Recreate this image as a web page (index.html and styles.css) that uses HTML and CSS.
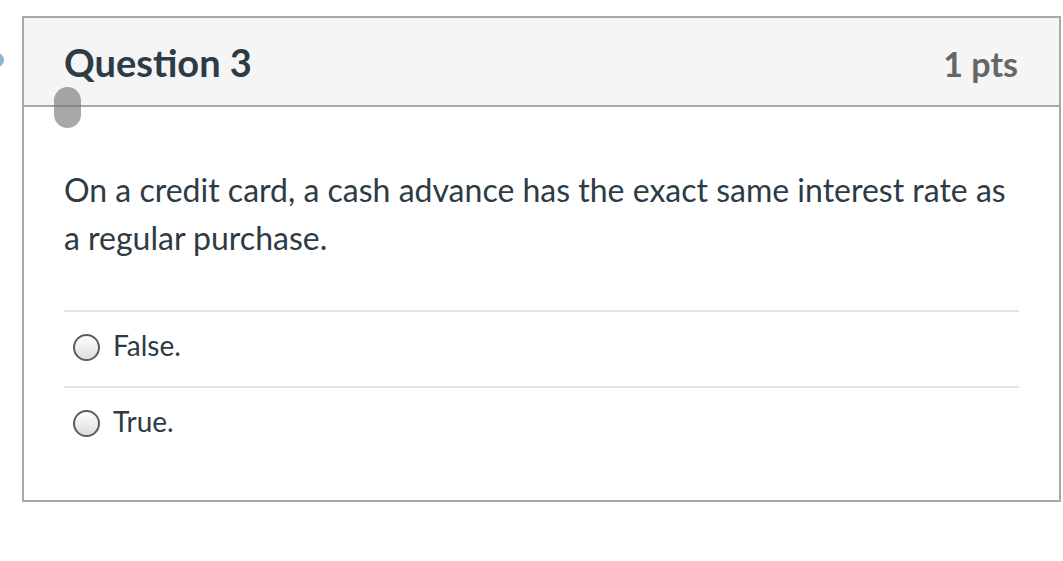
FILE: index.html
```html
<!DOCTYPE html>
<html lang="en">
<head>
    <meta charset="UTF-8">
    <meta name="viewport" content="width=device-width, initial-scale=1.0">
    <title>Question 3</title>
    <link rel="stylesheet" href="styles.css">
</head>
<body>

    <div class="page">
        <span class="flag"></span>
        <div class="question">
            <div class="header">
                <h2 class="title">Question 3</h2>
                <div class="points">1 pts</div>
                <span class="handle"></span>
            </div>
            <div class="content">
                <p class="text">On a credit card, a cash advance has the exact same interest rate as a regular purchase.</p>
                <div class="answers">
                    <label class="answer">
                        <span class="radio"></span>
                        <span class="label">False.</span>
                    </label>
                    <label class="answer">
                        <span class="radio"></span>
                        <span class="label">True.</span>
                    </label>
                </div>
            </div>
        </div>
    </div>

</body>
</html>
```

FILE: styles.css
```css
body
    {
        margin: 0;
        background: #ffffff;
        font-family: Lato, "Open Sans", sans-serif;
        color: #2d3b45;
    }
    .page
    {
        position: relative;
        padding: 16px 2px 0 22px;
    }
    .flag
    {
        position: absolute;
        top: 53px;
        left: -10px;
        width: 14px;
        height: 14px;
        border-radius: 50%;
        background: #8fb4cf;
    }
    .question
    {
        border: 2px solid #a8a8a8;
    }
    .header
    {
        position: relative;
        display: flex;
        justify-content: space-between;
        align-items: center;
        height: 87px;
        padding: 0 41px 0 40px;
        background: #f5f5f5;
        border-bottom: 2px solid #a8a8a8;
    }
    .title
    {
        margin: 0;
        font-size: 38px;
        font-weight: bold;
        color: #2d3b45;
    }
    .points
    {
        padding-top: 3px;
        font-size: 34px;
        font-weight: bold;
        color: #666666;
    }
    .handle
    {
        position: absolute;
        left: 30px;
        bottom: -23px;
        width: 27px;
        height: 41px;
        border-radius: 14px;
        background: rgba(110, 110, 110, 0.6);
    }
    .content
    {
        padding: 59px 40px 38px 40px;
    }
    .text
    {
        margin: 0 0 48px 0;
        font-size: 32px;
        line-height: 48px;
    }
    .answers
    {
        display: flex;
        flex-direction: column;
    }
    .answer
    {
        display: flex;
        align-items: center;
        gap: 13px;
        height: 71px;
        padding-bottom: 3px;
        padding-left: 9px;
        border-top: 2px solid #e2e2e2;
        font-size: 28px;
    }
    .label
    {
        margin-bottom: 5px;
    }
    .radio
    {
        width: 23px;
        height: 23px;
        border: 2px solid #5c5c5c;
        border-radius: 50%;
        background: linear-gradient(#ffffff, #dcdcdc);
    }
```
